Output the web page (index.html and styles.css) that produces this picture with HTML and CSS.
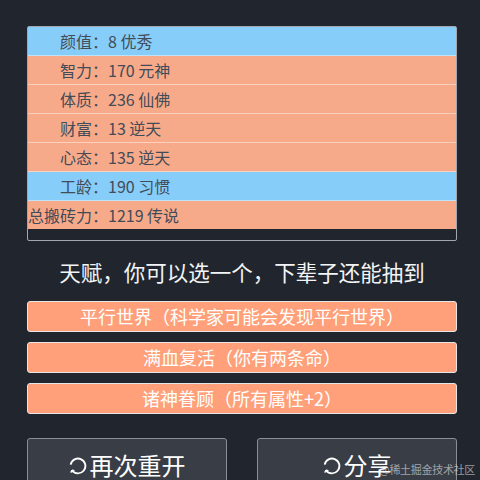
FILE: index.html
```html
<!DOCTYPE html>
<html lang="zh-CN">
<head>
<meta charset="utf-8">
<title>人生重开</title>
<link rel="stylesheet" href="styles.css">
</head>
<body>
<div class="page">
  <div class="stats">
    <table class="stat-table">
      <tr class="row blue"><td class="label">颜值：</td><td class="value">8 优秀</td></tr>
      <tr class="row salmon"><td class="label">智力：</td><td class="value">170 元神</td></tr>
      <tr class="row salmon"><td class="label">体质：</td><td class="value">236 仙佛</td></tr>
      <tr class="row salmon"><td class="label">财富：</td><td class="value">13 逆天</td></tr>
      <tr class="row salmon"><td class="label">心态：</td><td class="value">135 逆天</td></tr>
      <tr class="row blue"><td class="label">工龄：</td><td class="value">190 习惯</td></tr>
      <tr class="row salmon last"><td class="label">总搬砖力：</td><td class="value">1219 传说</td></tr>
    </table>
  </div>

  <h2 class="title">天赋，你可以选一个，下辈子还能抽到</h2>

  <ul class="talents">
    <li class="talent">平行世界（科学家可能会发现平行世界）</li>
    <li class="talent">满血复活（你有两条命）</li>
    <li class="talent">诸神眷顾（所有属性+2）</li>
  </ul>

  <div class="actions">
    <button class="action">
      <svg class="icon" viewBox="0 0 18 18" width="18" height="18"><path d="M1.7 7.6 A7.4 7.4 0 1 1 2.9 13.2" fill="none" stroke="#fff" stroke-width="1.9"/><path d="M2.9 13.2 L1.8 15.6 M2.9 13.2 L5.4 13.8" fill="none" stroke="#fff" stroke-width="1.4"/></svg>
      <span>再次重开</span>
    </button>
    <button class="action">
      <svg class="icon" viewBox="0 0 18 18" width="18" height="18"><path d="M1.7 7.6 A7.4 7.4 0 1 1 2.9 13.2" fill="none" stroke="#fff" stroke-width="1.9"/><path d="M2.9 13.2 L1.8 15.6 M2.9 13.2 L5.4 13.8" fill="none" stroke="#fff" stroke-width="1.4"/></svg>
      <span>分享</span>
    </button>
  </div>
</div>
<div class="watermark">@稀土掘金技术社区</div>
</body>
</html>
```

FILE: styles.css
```css
html, body {
  margin: 0;
  padding: 0;
  background: #21262e;
  height: 100%;
  overflow: hidden;
}

body {
  font-family: "Noto Sans CJK SC", "Noto Sans", sans-serif;
  position: relative;
  text-spacing-trim: space-all;
}

.page {
  width: 430px;
  margin-left: 27px;
  padding-top: 26px;
}

.stats {
  border: 1px solid #a3a7ad;
  border-radius: 2px;
  padding-bottom: 11px;
}

.stat-table {
  width: 100%;
  border-spacing: 0;
  font-size: 16px;
  color: #434b57;
}

.row td {
  height: 28px;
  padding: 0;
  border-bottom: 1px solid rgba(255, 255, 255, 0.45);
  line-height: 28px;
  white-space: nowrap;
}

.row.last td {
  border-bottom: none;
}

.row.blue {
  background: #87cdf9;
}

.row.salmon {
  background: #f7aa8a;
}

.label {
  text-align: right;
  width: 1%;
}

.value {
  text-align: left;
}

.title {
  margin: 16px 0 14px;
  height: 30px;
  line-height: 30px;
  font-size: 21.5px;
  font-weight: normal;
  text-align: center;
  color: #f2f4f6;
}

.talents {
  list-style: none;
  margin: 0;
  padding: 0;
}

.talent {
  box-sizing: border-box;
  height: 31px;
  margin-bottom: 10px;
  border: 1px solid #e6e6e6;
  border-radius: 3px;
  background: #ffa07a;
  color: #fff;
  font-size: 18px;
  line-height: 29px;
  text-align: center;
}

.actions {
  display: flex;
  gap: 30px;
  margin-top: 24px;
}

.action {
  flex: 0 0 200px;
  box-sizing: border-box;
  height: 56px;
  border: 1px solid #8b8e94;
  border-radius: 3px;
  background: #393d45;
  color: #fff;
  font-family: inherit;
  font-size: 24px;
  display: flex;
  align-items: flex-start;
  justify-content: center;
  padding-top: 11px;
  line-height: 30px;
}

.icon {
  margin-top: 7px;
  margin-right: 3px;
}

.watermark {
  position: absolute;
  right: 5px;
  bottom: 5px;
  font-size: 11px;
  line-height: 12px;
  color: rgba(230, 232, 236, 0.6);
  letter-spacing: -0.3px;
}
```
